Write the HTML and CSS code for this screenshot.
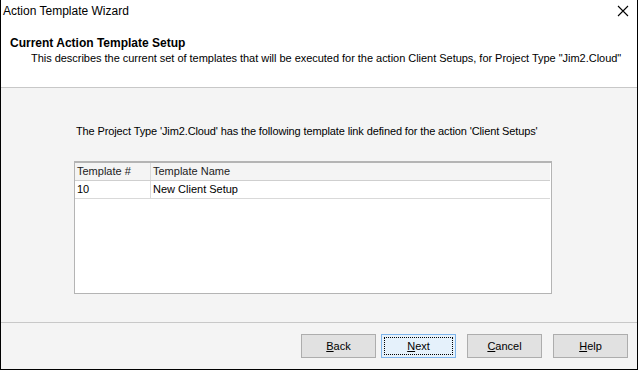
FILE: index.html
```html
<!DOCTYPE html>
<html lang="en">
<head>
    <meta charset="UTF-8">
    <title>Action Template Wizard</title>
    <link rel="stylesheet" href="styles.css">
</head>
<body>
    <div class="window">
        <div class="titlebar">
            <span class="title">Action Template Wizard</span>
            <svg class="close" width="12" height="12" viewBox="0 0 12 12">
                <path d="M1 1 L11 11 M11 1 L1 11" stroke="#000" stroke-width="1.1" fill="none"/>
            </svg>
        </div>

        <div class="header">
            <div class="heading">Current Action Template Setup</div>
            <div class="subheading">This describes the current set of templates that will be executed for the action Client Setups, for Project Type "Jim2.Cloud"</div>
        </div>

        <div class="content">
            <p class="intro">The Project Type 'Jim2.Cloud' has the following template link defined for the action 'Client Setups'</p>
            <div class="grid">
                <div class="grid-row grid-head">
                    <div class="cell col-num">Template #</div>
                    <div class="cell col-name">Template Name</div>
                </div>
                <div class="grid-row">
                    <div class="cell col-num">10</div>
                    <div class="cell col-name">New Client Setup</div>
                </div>
            </div>
        </div>

        <div class="footer">
            <button class="btn"><u>B</u>ack</button>
            <button class="btn btn-default"><span class="focus"><u>N</u>ext</span></button>
            <button class="btn btn-gap"><u>C</u>ancel</button>
            <button class="btn btn-gap"><u>H</u>elp</button>
        </div>
    </div>
</body>
</html>
```

FILE: styles.css
```css
html, body {
    margin: 0;
    padding: 0;
}

body {
    font-family: "Liberation Sans", Arial, sans-serif;
    font-size: 11px;
    color: #000;
    background: #fff;
}

.window {
    width: 638px;
    height: 370px;
    box-sizing: border-box;
    border: 1px solid #000;
    border-top: none;
    display: flex;
    flex-direction: column;
    background: #f4f4f4;
}

.titlebar {
    height: 30px;
    background: #fff;
    display: flex;
    align-items: flex-start;
    justify-content: space-between;
    padding: 4px 8px 0 2px;
    box-sizing: border-box;
}

.title {
    font-size: 12px;
}

.close {
    margin-top: 1px;
}

.header {
    height: 58px;
    background: #fff;
    border-bottom: 1px solid #c8c8c8;
    box-sizing: border-box;
    padding: 6px 0 0 9px;
}

.heading {
    font-weight: bold;
    font-size: 12px;
    line-height: 14px;
}

.subheading {
    padding-left: 21px;
    line-height: 16px;
    letter-spacing: -0.03px;
}

.content {
    flex: 1;
    padding: 36px 0 0 73px;
}

.intro {
    margin: 0 0 23px 2px;
    line-height: 14px;
    letter-spacing: -0.12px;
}

.grid {
    width: 478px;
    height: 133px;
    box-sizing: border-box;
    border: 1px solid #b4b4b4;
    border-top-width: 2px;
    background: #fff;
}

.grid-row {
    display: flex;
    height: 18px;
    border-bottom: 1px solid #d9d9d9;
    box-sizing: border-box;
    margin-right: 1px;
}

.grid-head {
    background: #f4f4f4;
    border-bottom-color: #cfcfcf;
    color: #222;
}

.cell {
    line-height: 17px;
    padding-left: 2px;
    box-sizing: border-box;
}

.col-num {
    width: 76px;
    border-right: 1px solid #dadada;
}

.col-name {
    flex: 1;
    padding-left: 2px;
}

.footer {
    height: 47px;
    border-top: 1px solid #c8c8c8;
    box-sizing: border-box;
    display: flex;
    padding: 11px 0 0 300px;
}

.btn {
    width: 75px;
    height: 24px;
    margin-right: 5px;
    border: 1px solid #adadad;
    background: #e1e1e1;
    font-family: "Liberation Sans", Arial, sans-serif;
    font-size: 11px;
    color: #000;
    padding: 0;
}

.btn-gap {
    margin-left: 6px;
}

.btn-default {
    border-color: #7eb4ea;
    background: #e5f1fb;
    padding: 2px;
}

.focus {
    display: flex;
    align-items: center;
    justify-content: center;
    height: 100%;
    border: 1px dotted #000;
    box-sizing: border-box;
}
```
